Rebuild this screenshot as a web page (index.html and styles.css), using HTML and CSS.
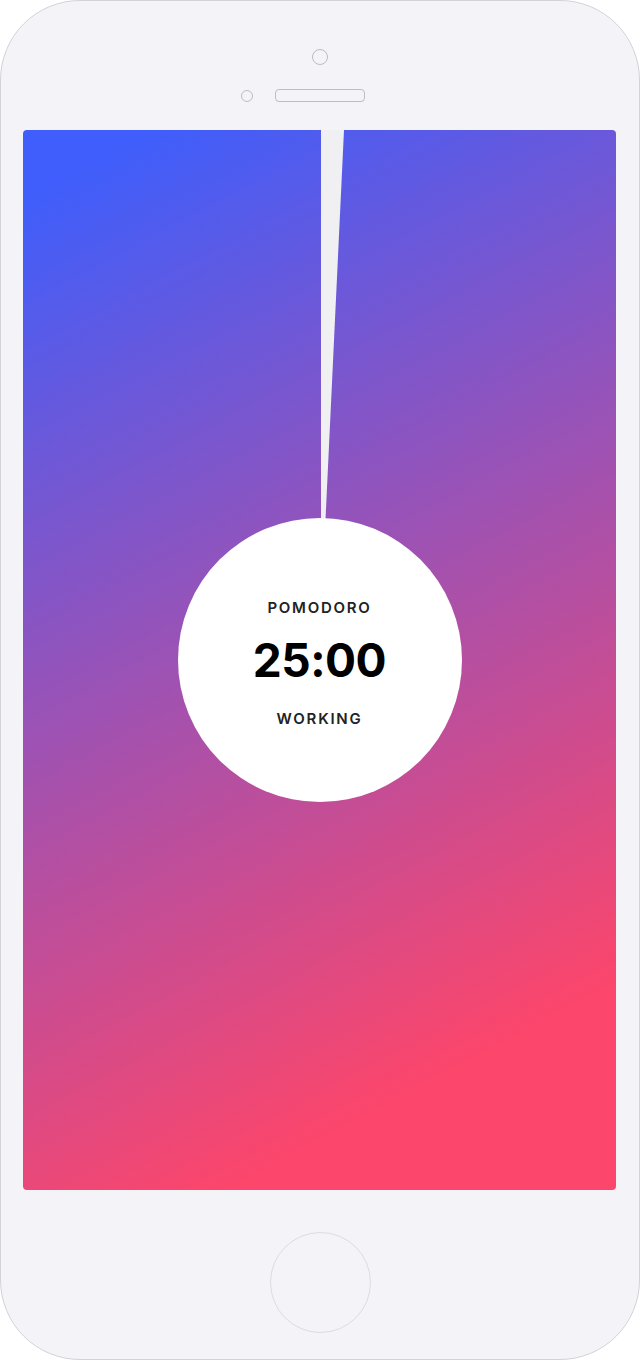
FILE: index.html
```html
<!DOCTYPE html>
<html lang="en">
<head>
<meta charset="utf-8">
<title>Pomodoro</title>
<link rel="stylesheet" href="styles.css">
</head>
<body>
<div class="phone">
  <div class="phone-top">
    <div class="camera"></div>
    <div class="sensor-row">
      <div class="sensor"></div>
      <div class="speaker"></div>
      <div></div>
    </div>
  </div>
  <div class="screen">
    <svg class="hand" width="593" height="420" viewBox="0 0 593 420">
      <polygon points="298,0 321,0 302,400 298,400" fill="#f0f0f2"/>
    </svg>
    <div class="dial">
      <div class="label">POMODORO</div>
      <div class="time">25:00</div>
      <div class="label">WORKING</div>
    </div>
  </div>
  <div class="phone-bottom">
    <div class="home"></div>
  </div>
</div>
</body>
</html>
```

FILE: styles.css
```css
html, body {
  margin: 0;
  padding: 0;
  background: #ffffff;
}

.phone {
  box-sizing: border-box;
  width: 640px;
  height: 1360px;
  border: 1px solid #d3d3d6;
  border-radius: 80px;
  background: #f4f3f8;
  display: flex;
  flex-direction: column;
  align-items: stretch;
}

.phone-top {
  height: 129px;
  display: flex;
  flex-direction: column;
  align-items: center;
  padding-top: 48px;
  box-sizing: border-box;
}

.camera {
  box-sizing: border-box;
  width: 16px;
  height: 16px;
  border-radius: 50%;
  border: 1.5px solid #bdbdc1;
}

.sensor-row {
  margin-top: 24px;
  width: 100%;
  display: grid;
  grid-template-columns: 1fr 90px 1fr;
  align-items: center;
}

.sensor {
  box-sizing: border-box;
  justify-self: end;
  margin-right: 22px;
  width: 12px;
  height: 12px;
  border-radius: 50%;
  border: 1.5px solid #bdbdc1;
}

.speaker {
  box-sizing: border-box;
  width: 90px;
  height: 13px;
  border-radius: 4px;
  border: 1.5px solid #bdbdc1;
}

.screen {
  position: relative;
  margin-left: 22px;
  width: 593px;
  height: 1060px;
  border-radius: 4px;
  background: linear-gradient(152deg, #3f5efb 5%, #fc466b 85%);
  display: flex;
  align-items: center;
  justify-content: center;
  overflow: hidden;
}

.hand {
  position: absolute;
  left: 0;
  top: 0;
}

.dial {
  position: relative;
  box-sizing: border-box;
  width: 284px;
  height: 284px;
  border-radius: 50%;
  background: #ffffff;
  display: flex;
  flex-direction: column;
  align-items: center;
  justify-content: center;
  padding-top: 6px;
  font-family: Inter, "Liberation Sans", sans-serif;
}

.label {
  font-size: 15px;
  line-height: 20px;
  font-weight: 600;
  letter-spacing: 1.75px;
  color: #222222;
}

.time {
  font-size: 46px;
  line-height: 56px;
  font-weight: 700;
  letter-spacing: -0.5px;
  color: #000000;
  margin: 14px 0 21px;
}

.phone-bottom {
  flex: 1;
  display: flex;
  justify-content: center;
  padding-top: 42px;
}

.home {
  box-sizing: border-box;
  width: 101px;
  height: 101px;
  border-radius: 50%;
  border: 1px solid #dcdbe2;
}
```
